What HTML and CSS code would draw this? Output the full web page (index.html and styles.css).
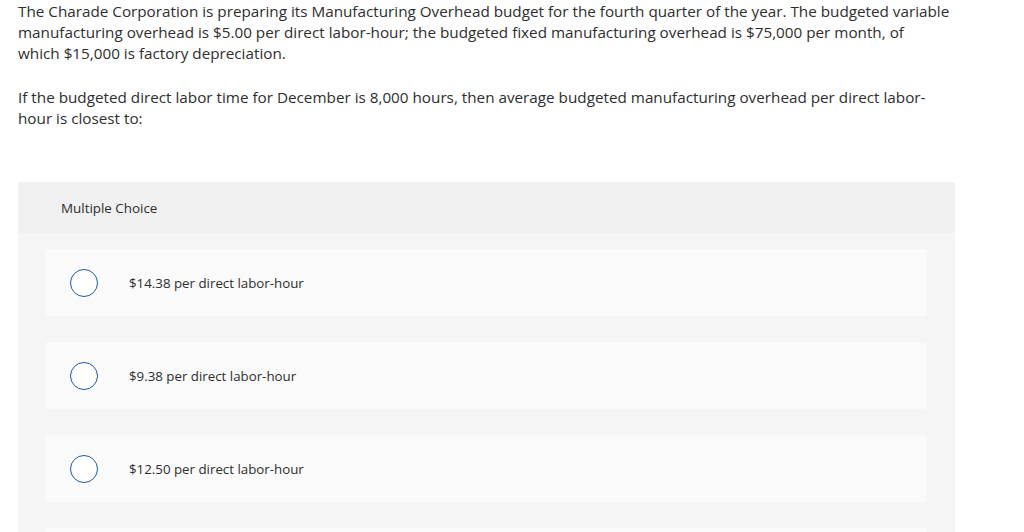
FILE: index.html
```html
<!DOCTYPE html>
<html>
<head>
<meta charset="utf-8">
<link rel="stylesheet" href="styles.css">
</head>
<body>
<div class="page">
  <div class="question">
    <p>The Charade Corporation is preparing its Manufacturing Overhead budget for the fourth quarter of the year. The budgeted variable manufacturing overhead is $5.00 per direct labor-hour; the budgeted fixed manufacturing overhead is $75,000 per month, of<br>which $15,000 is factory depreciation.</p>
    <p>If the budgeted direct labor time for December is 8,000 hours, then average budgeted manufacturing overhead per direct labor-hour is closest to:</p>
  </div>
  <div class="mc">
    <div class="mc-head">Multiple Choice</div>
    <div class="mc-body">
      <div class="opt"><span class="radio"></span><span class="opt-text">$14.38 per direct labor-hour</span></div>
      <div class="opt"><span class="radio"></span><span class="opt-text">$9.38 per direct labor-hour</span></div>
      <div class="opt"><span class="radio"></span><span class="opt-text">$12.50 per direct labor-hour</span></div>
      <div class="opt"><span class="radio"></span><span class="opt-text">$11.25 per direct labor-hour</span></div>
    </div>
  </div>
</div>
</body>
</html>
```
FILE: styles.css
```css
html, body {
  margin: 0;
  padding: 0;
  background: #fff;
  overflow: hidden;
  height: 532px;
}
body {
  font-family: "Open Sans", "Liberation Sans", sans-serif;
  color: #2e2e2e;
}
.page {
  width: 937px;
  padding: 0 0 0 18px;
}
.question {
  font-size: 15.25px;
  line-height: 21px;
  padding-top: 1px;
}
.question p {
  margin: 0 0 23px 0;
}
.question p:last-child {
  margin-bottom: 0;
}
.mc {
  margin-top: 53px;
  background: #f5f5f5;
  border-radius: 3px 3px 0 0;
}
.mc-head {
  background: #f0f0f0;
  height: 51px;
  display: flex;
  align-items: center;
  padding-left: 43px;
  font-size: 13.4px;
  border-radius: 3px 3px 0 0;
}
.mc-body {
  padding: 16px 28px 0 27px;
  display: flex;
  flex-direction: column;
  gap: 26px;
}
.opt {
  height: 67px;
  background: #fafafa;
  border-radius: 3px;
  display: flex;
  align-items: center;
}
.radio {
  width: 26px;
  height: 26px;
  border: 1.5px solid #205b96;
  border-radius: 50%;
  margin-left: 25px;
  background: #fff;
  flex: none;
}
.opt-text {
  margin-left: 31px;
  font-size: 13.3px;
}
```
